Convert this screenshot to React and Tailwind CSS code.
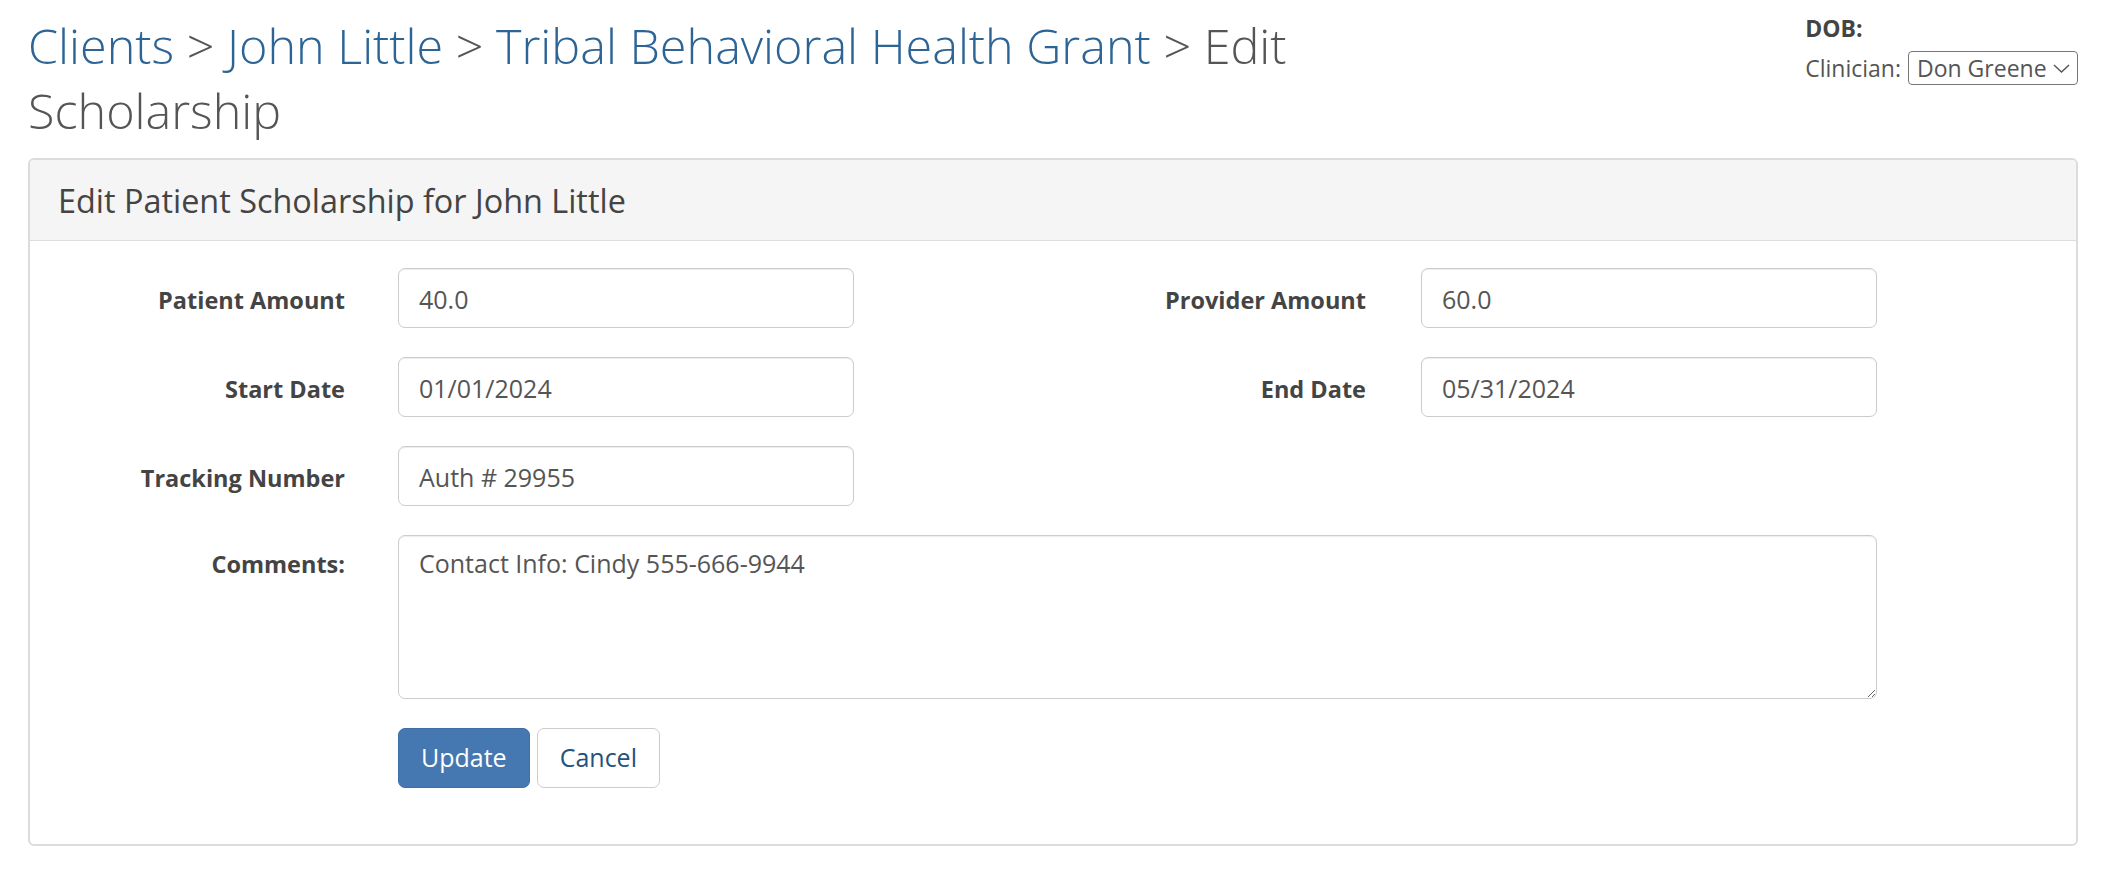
import React from "react";

const FONT = { fontFamily: '"Open Sans", "Noto Sans", Arial, sans-serif' };

function Field({ label, value, labelWidth, gap }) {
  return (
    <div className="flex items-center">
      <label className={`${labelWidth} pt-[5px] text-right text-[23.5px] font-bold text-[#444]`}>{label}</label>
      <input
        className={`${gap} h-[60px] w-[456px] rounded-[7px] border border-[#ccc] bg-white px-[20px] pt-[2px] text-[25px] text-[#555] shadow-[inset_0_1px_1px_rgba(0,0,0,0.075)] outline-none`}
        defaultValue={value}
        readOnly
      />
    </div>
  );
}

export default function App() {
  return (
    <div className="min-h-screen bg-white pl-[28px] pr-[24px]" style={FONT}>
      {/* breadcrumb title + client info */}
      <div className="flex items-start justify-between">
        <h1 className="mt-[13px] w-[1340px] text-[48.5px] font-light leading-[65px] text-[#555]">
          <a className="text-[#2d6496]">Clients</a>
          <span> &gt; </span>
          <a className="text-[#2d6496]">John Little</a>
          <span> &gt; </span>
          <a className="text-[#2d6496]">Tribal Behavioral Health Grant</a>
          <span> &gt; Edit</span> <span>Scholarship</span>
        </h1>
        <div className="flex flex-col pt-[11px] text-[23px] text-[#555]">
          <div className="font-bold leading-[34px] text-[#444]">DOB:</div>
          <div className="mt-[6px] flex items-center gap-[7px]">
            <span>Clinician:</span>
            <div className="flex h-[34px] w-[170px] items-center justify-between rounded-[4px] border border-[#777] pl-[8px] pr-[7px]">
              <span>Don Greene</span>
              <svg width="17" height="9" viewBox="0 0 17 9" fill="none">
                <polyline points="1,1 8.5,8 16,1" stroke="#555" strokeWidth="1.4" />
              </svg>
            </div>
          </div>
        </div>
      </div>

      {/* panel */}
      <div className="mt-[15px] overflow-hidden rounded-[6px] border-2 border-[#dcdcdc]">
        <div className="flex h-[81px] items-center border-b border-[#ddd] bg-[#f5f5f5] pl-[28px] text-[32.4px] text-[#444]">
          Edit Patient Scholarship for John Little
        </div>
        <div className="pt-[27px] pb-[27px]">
          <div className="mb-[29px] flex">
            <Field label="Patient Amount" value="40.0" labelWidth="w-[315px]" gap="ml-[53px]" />
            <Field label="Provider Amount" value="60.0" labelWidth="w-[512px]" gap="ml-[55px]" />
          </div>
          <div className="mb-[29px] flex">
            <Field label="Start Date" value="01/01/2024" labelWidth="w-[315px]" gap="ml-[53px]" />
            <Field label="End Date" value="05/31/2024" labelWidth="w-[512px]" gap="ml-[55px]" />
          </div>
          <div className="mb-[29px] flex">
            <Field label="Tracking Number" value="Auth # 29955" labelWidth="w-[315px]" gap="ml-[53px]" />
          </div>
          <div className="mb-[29px] flex items-start">
            <label className="w-[315px] pt-[12px] text-right text-[23.5px] font-bold leading-[34px] text-[#444]">Comments:</label>
            <textarea
              className="ml-[53px] h-[164px] w-[1479px] rounded-[7px] border border-[#ccc] px-[20px] py-[10px] text-[25px] leading-[34px] text-[#555] shadow-[inset_0_1px_1px_rgba(0,0,0,0.075)] outline-none"
              defaultValue="Contact Info: Cindy 555-666-9944"
            />
          </div>
          <div className="mb-[29px] ml-[368px] flex gap-[7px]">
            <button className="h-[60px] rounded-[7px] border border-[#3f6fa6] bg-[#4577b0] px-[22px] text-[25px] text-white">
              Update
            </button>
            <button className="h-[60px] rounded-[7px] border border-[#ccc] bg-white px-[22px] text-[25px] text-[#23527c]">
              Cancel
            </button>
          </div>
        </div>
      </div>
    </div>
  );
}
